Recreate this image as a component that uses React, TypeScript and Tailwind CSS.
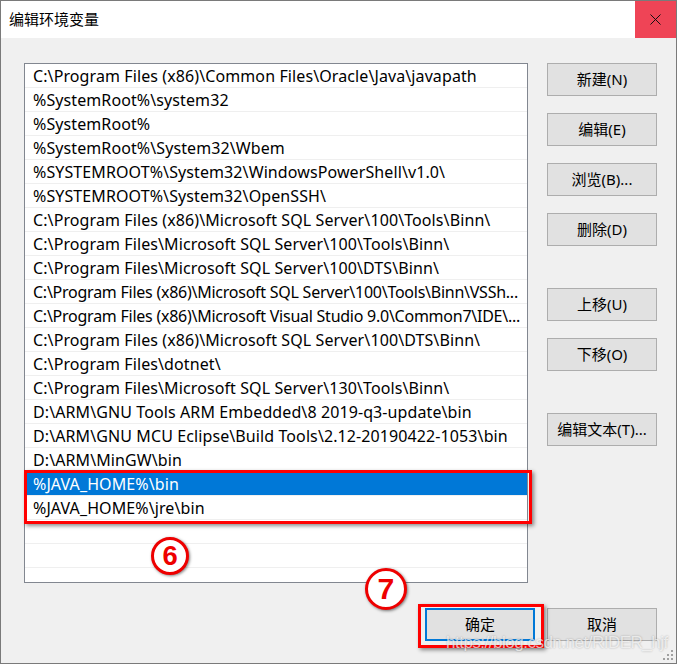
import React from "react";

const rows = [
  "C:\\Program Files (x86)\\Common Files\\Oracle\\Java\\javapath",
  "%SystemRoot%\\system32",
  "%SystemRoot%",
  "%SystemRoot%\\System32\\Wbem",
  "%SYSTEMROOT%\\System32\\WindowsPowerShell\\v1.0\\",
  "%SYSTEMROOT%\\System32\\OpenSSH\\",
  "C:\\Program Files (x86)\\Microsoft SQL Server\\100\\Tools\\Binn\\",
  "C:\\Program Files\\Microsoft SQL Server\\100\\Tools\\Binn\\",
  "C:\\Program Files\\Microsoft SQL Server\\100\\DTS\\Binn\\",
  "C:\\Program Files (x86)\\Microsoft SQL Server\\100\\Tools\\Binn\\VSSh...",
  "C:\\Program Files (x86)\\Microsoft Visual Studio 9.0\\Common7\\IDE\\...",
  "C:\\Program Files (x86)\\Microsoft SQL Server\\100\\DTS\\Binn\\",
  "C:\\Program Files\\dotnet\\",
  "C:\\Program Files\\Microsoft SQL Server\\130\\Tools\\Binn\\",
  "D:\\ARM\\GNU Tools ARM Embedded\\8 2019-q3-update\\bin",
  "D:\\ARM\\GNU MCU Eclipse\\Build Tools\\2.12-20190422-1053\\bin",
  "D:\\ARM\\MinGW\\bin",
  "%JAVA_HOME%\\bin",
  "%JAVA_HOME%\\jre\\bin",
  "",
  "",
];

const font = { fontFamily: '"Noto Sans", "Noto Sans CJK SC", sans-serif' };

function Btn({ label, primary }: { label: string; primary?: boolean }) {
  return (
    <div
      className={
        "w-[110px] h-[33px] flex items-center justify-center bg-[#e1e1e1] text-[15px] text-black " +
        (primary ? "border-2 border-[#0078d7]" : "border border-[#adadad]")
      }
    >
      {label}
    </div>
  );
}

function Circle({ n, size }: { n: string; size: number }) {
  return (
    <div
      className="rounded-full border-[3px] border-[#ee0000] bg-white flex items-center justify-center text-[#ee0000] font-bold shadow-[1px_1px_3px_rgba(0,0,0,0.5)]"
      style={{ width: size, height: size, fontSize: size * 0.72, fontFamily: '"Liberation Sans", Arial, sans-serif' }}
    >
      {n}
    </div>
  );
}

export default function App() {
  return (
    <div
      className="relative w-[677px] h-[664px] border border-[#7a7a7a] bg-[#f0f0f0] flex flex-col overflow-hidden"
      style={font}
    >
      {/* title bar */}
      <div className="h-[37px] bg-white flex items-center shrink-0">
        <div className="pl-[8px] text-[15px] text-black flex-1 leading-none">编辑环境变量</div>
        <div className="w-[41px] h-[37px] bg-[#ef4456] flex items-center justify-center">
          <svg width="11" height="11" viewBox="0 0 11 11">
            <path d="M0.5 0.5 L10.5 10.5 M10.5 0.5 L0.5 10.5" stroke="#111" strokeWidth="1" />
          </svg>
        </div>
      </div>

      {/* body */}
      <div className="flex-1 flex flex-col pt-[25px] pl-[23px] pr-[19px]">
        <div className="flex">
          <div className="w-[504px] h-[520px] border border-[#828790] bg-white overflow-hidden">
            {rows.map((r, i) => (
              <div
                key={i}
                className={
                  "h-[24px] flex items-center pl-[8px] pt-[1px] text-[16px] whitespace-nowrap overflow-hidden border-b border-[#efefef] " +
                  (i === 9 || i === 10 ? "tracking-[-0.25px] " : "tracking-[0.1px] ") +
                  (i === 17 ? "bg-[#0078d7] text-white" : "text-black")
                }
              >
                {r}
              </div>
            ))}
          </div>
          <div className="ml-[19px] flex flex-col">
            <div className="flex flex-col gap-[17px]">
              <Btn label="新建(N)" />
              <Btn label="编辑(E)" />
              <Btn label="浏览(B)..." />
              <Btn label="删除(D)" />
            </div>
            <div className="flex flex-col gap-[17px] mt-[42px]">
              <Btn label="上移(U)" />
              <Btn label="下移(O)" />
            </div>
            <div className="mt-[42px]">
              <Btn label="编辑文本(T)..." />
            </div>
          </div>
        </div>
        <div className="flex justify-end gap-[12px] mt-[25px]">
          <Btn label="确定" primary />
          <Btn label="取消" />
        </div>
      </div>

      {/* annotations */}
      <div className="absolute left-[23px] top-[469px] w-[508px] h-[54px] border-[3px] border-[#ff0000] shadow-[2px_2px_4px_rgba(0,0,0,0.45)]" />
      <div className="absolute left-[150px] top-[536px]">
        <Circle n="6" size={38} />
      </div>
      <div className="absolute left-[417px] top-[603px] w-[126px] h-[44px] border-[3px] border-[#ff0000] shadow-[2px_2px_4px_rgba(0,0,0,0.45)]" />
      <div className="absolute left-[364px] top-[567px]">
        <Circle n="7" size={42} />
      </div>
      <div
        className="absolute left-[445px] top-[633px] text-[17px] leading-none whitespace-nowrap text-white/70 tracking-[-0.5px] [text-shadow:0_0_2px_rgba(0,0,0,0.3)]"
        style={{ fontFamily: '"Liberation Sans", Arial, sans-serif' }}
      >
        https://blog.csdn.net/RIDER_hjf
      </div>
      <svg className="absolute right-[3px] bottom-[3px]" width="10" height="10" viewBox="0 0 10 10">
        <rect x="8" y="0" width="2" height="2" fill="#a0a0a0" />
        <rect x="4" y="4" width="2" height="2" fill="#a0a0a0" />
        <rect x="8" y="4" width="2" height="2" fill="#a0a0a0" />
        <rect x="0" y="8" width="2" height="2" fill="#a0a0a0" />
        <rect x="4" y="8" width="2" height="2" fill="#a0a0a0" />
        <rect x="8" y="8" width="2" height="2" fill="#a0a0a0" />
      </svg>
    </div>
  );
}
